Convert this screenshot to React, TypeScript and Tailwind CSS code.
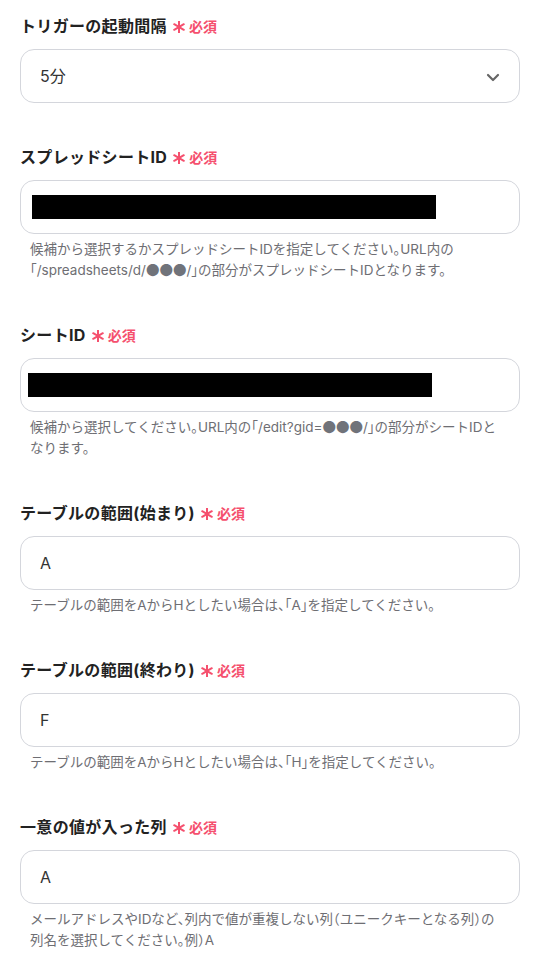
import React from 'react';

const font = { fontFamily: 'Inter, "Noto Sans CJK JP", "Noto Sans", sans-serif' };

const Required = () => (
  <span className="ml-[6px] inline-flex items-center gap-[4px] text-[14px] font-semibold tracking-normal text-[#f5506e]">
    <svg width="12" height="12" viewBox="0 0 12 12" className="mt-[2px]">
      <g stroke="#f5506e" strokeWidth="2" strokeLinecap="round">
        <line x1="6" y1="0.5" x2="6" y2="11.5" />
        <line x1="1.2" y1="3.2" x2="10.8" y2="8.8" />
        <line x1="1.2" y1="8.8" x2="10.8" y2="3.2" />
      </g>
    </svg>
    必須
  </span>
);

// placeholder dots rendered by the CJK font so they come out full-width
const Dots = () => (
  <span className="leading-[0] text-[#70737a] [font-family:'Noto_Sans_CJK_JP',sans-serif]">●●●</span>
);

interface FieldProps {
  label: string;
  children: React.ReactNode;
  help?: React.ReactNode;
}

const Field = ({ label, children, help }: FieldProps) => (
  <div className="mb-[42px]">
    <div className="flex items-center h-[24px] text-[16px] font-bold text-[#222] tracking-[0.02em]">
      {label}
      <Required />
    </div>
    <div className="mt-[11px] h-[54px] w-[500px] rounded-[14px] border border-[#d4d6dc] bg-white flex items-center relative">
      {children}
    </div>
    {help && (
      <p className="mt-[5px] pl-[10px] pr-[4px] text-[13.5px] leading-[21px] text-[#6e6e73] [font-feature-settings:'halt']">
        {help}
      </p>
    )}
  </div>
);

export default function App() {
  return (
    <div className="min-h-screen bg-white pl-[20px] pt-[14px]" style={font}>
      <Field label="トリガーの起動間隔">
        <span className="pl-[19px] text-[16px] text-[#333]">5分</span>
        <svg className="absolute right-[19px] top-[23px]" width="14" height="9" viewBox="0 0 14 9">
          <path d="M2 2l5 5 5-5" fill="none" stroke="#666" strokeWidth="2.2" strokeLinecap="round" strokeLinejoin="round" />
        </svg>
      </Field>

      <Field
        label="スプレッドシートID"
        help={
          <>
            候補から選択するかスプレッドシートIDを指定してください。URL内の
            <br />
            「/spreadsheets/d/<Dots />/」の部分がスプレッドシートIDとなります。
          </>
        }
      >
        <div className="ml-[11px] h-[24px] w-[404px] bg-black" />
      </Field>

      <Field
        label="シートID"
        help={
          <>
            候補から選択してください。URL内の「/edit?gid=<Dots />/」の部分がシートIDと
            <br />
            なります。
          </>
        }
      >
        <div className="ml-[7px] h-[24px] w-[404px] bg-black" />
      </Field>

      <Field
        label="テーブルの範囲(始まり)"
        help="テーブルの範囲をAからHとしたい場合は、「A」を指定してください。"
      >
        <span className="pl-[19px] text-[16px] text-[#333]">A</span>
      </Field>

      <Field
        label="テーブルの範囲(終わり)"
        help="テーブルの範囲をAからHとしたい場合は、「H」を指定してください。"
      >
        <span className="pl-[19px] text-[16px] text-[#333]">F</span>
      </Field>

      <Field
        label="一意の値が入った列"
        help={
          <>
            メールアドレスやIDなど、列内で値が重複しない列（ユニークキーとなる列）の
            <br />
            列名を選択してください。例）A
          </>
        }
      >
        <span className="pl-[19px] text-[16px] text-[#333]">A</span>
      </Field>
    </div>
  );
}
